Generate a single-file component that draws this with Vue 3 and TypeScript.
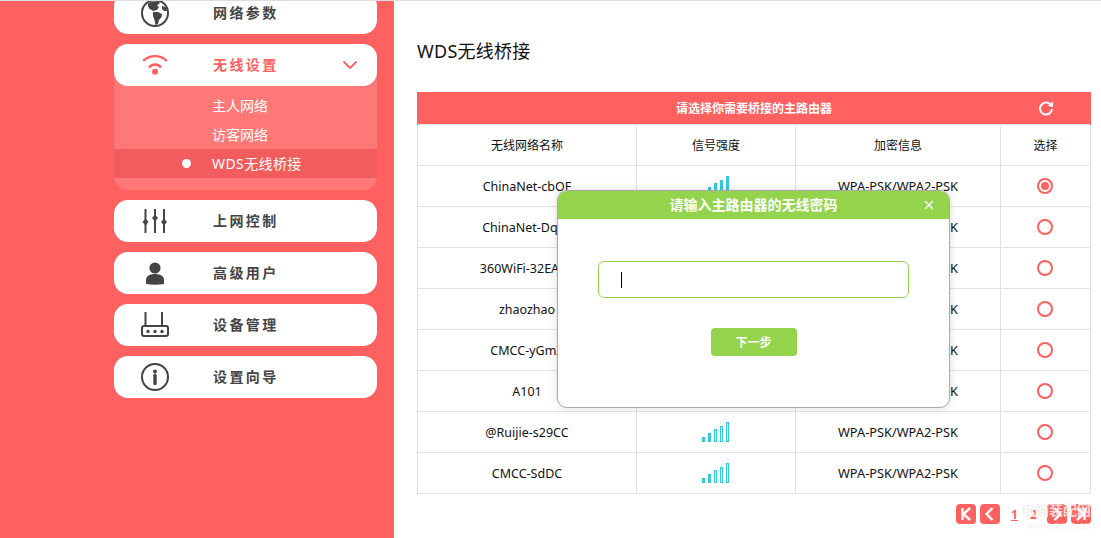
<script setup lang="ts">
interface Network {
  name: string
  bars: number
  checked?: boolean
}

const networks: Network[] = [
  { name: 'ChinaNet-cbOF', bars: 5, checked: true },
  { name: 'ChinaNet-DqKF', bars: 4 },
  { name: '360WiFi-32EA0C', bars: 3 },
  { name: 'zhaozhao', bars: 3 },
  { name: 'CMCC-yGmX', bars: 2 },
  { name: 'A101', bars: 2 },
  { name: '@Ruijie-s29CC', bars: 2 },
  { name: 'CMCC-SdDC', bars: 2 },
]

const barHeights = [5, 9, 13, 16, 20]
const subMenu = ['主人网络', '访客网络', 'WDS无线桥接']
</script>

<template>
  <div class="page">
    <div class="top-line"></div>
    <div class="body">
      <aside class="sidebar">
        <div class="menu-item first">
          <svg class="icon" viewBox="0 0 30 30">
            <circle cx="15" cy="15" r="13" fill="none" stroke="#444" stroke-width="2" />
            <path d="M8 5.5 12 3.5 18 3 20 5 17 7.5 19 9 17 12 13 13 11 11.5 9.5 11 8 8Z" fill="#444" />
            <path d="M13 14 18 14 22 16 21.5 19 19 22 18 26 15.5 27 14.5 22 13 18Z" fill="#444" />
            <path d="M22 8 25.5 9 27 13 24 13 22 11Z" fill="#444" />
          </svg>
          <span class="label">网络参数</span>
        </div>

        <div class="menu-group">
          <div class="menu-item">
            <svg class="icon" viewBox="0 0 30 30">
              <path d="M3.2 11C9.5 4.5 20.5 4.5 26.8 11" fill="none" stroke="#ff6060" stroke-width="2.4" />
              <path d="M9 17.5C12 13.5 18 13.5 21 17.5" fill="none" stroke="#ff6060" stroke-width="2.4" />
              <circle cx="15" cy="21.8" r="3" fill="#ff6060" />
            </svg>
            <span class="label active">无线设置</span>
            <svg class="chevron" viewBox="0 0 16 10">
              <path d="M1.5 1.5 8 8 14.5 1.5" fill="none" stroke="#ff6060" stroke-width="1.8" />
            </svg>
          </div>
          <ul class="sub-menu">
            <li v-for="(entry, i) in subMenu" :key="entry" :class="{ current: i === 2 }">{{ entry }}</li>
          </ul>
        </div>

        <div class="menu-item">
          <svg class="icon" viewBox="0 0 30 30">
            <path d="M5.5 3V27M15 3V27M24 3V27" stroke="#444" stroke-width="2" />
            <path d="M5.5 12.5 8.5 16 5.5 19.5 2.5 16Z" fill="#444" />
            <path d="M15 8.5 18 12 15 15.5 12 12Z" fill="#444" />
            <path d="M24 12.5 27 16 24 19.5 21 16Z" fill="#444" />
          </svg>
          <span class="label">上网控制</span>
        </div>

        <div class="menu-item">
          <svg class="icon" viewBox="0 0 30 30">
            <circle cx="15" cy="10" r="5.6" fill="#444" />
            <path d="M6 26V22C6 18 10 16 15 16S24 18 24 22V26Q15 27.5 6 26Z" fill="#444" />
          </svg>
          <span class="label">高级用户</span>
        </div>

        <div class="menu-item">
          <svg class="icon" viewBox="0 0 30 30">
            <path d="M5.5 2V17M22 2V17" stroke="#444" stroke-width="2" />
            <rect x="2" y="16" width="26" height="10" rx="2" fill="none" stroke="#444" stroke-width="2" />
            <circle cx="8" cy="21.5" r="1.7" fill="#444" />
            <circle cx="15" cy="21.5" r="1.7" fill="#444" />
            <circle cx="22" cy="21.5" r="1.7" fill="#444" />
          </svg>
          <span class="label">设备管理</span>
        </div>

        <div class="menu-item">
          <svg class="icon" viewBox="0 0 30 30">
            <circle cx="15" cy="15" r="13" fill="none" stroke="#444" stroke-width="2" />
            <circle cx="15" cy="9.5" r="2" fill="#444" />
            <path d="M15 13.5V21.5" stroke="#444" stroke-width="3.4" stroke-linecap="round" />
          </svg>
          <span class="label">设置向导</span>
        </div>
      </aside>

      <main class="content">
        <h1 class="title">WDS无线桥接</h1>
        <table class="net-table">
          <colgroup>
            <col class="col-name" />
            <col class="col-signal" />
            <col class="col-enc" />
            <col />
          </colgroup>
          <thead>
            <tr class="banner">
              <th colspan="4">
                <div class="banner-inner">
                  请选择你需要桥接的主路由器
                  <svg class="refresh" viewBox="0 0 16 16">
                    <path d="M13.2 5.5A6 6 0 1 0 14 9" fill="none" stroke="#fff" stroke-width="2" />
                    <path d="M15 1.5 15 7 9.8 6Z" fill="#fff" />
                  </svg>
                </div>
              </th>
            </tr>
            <tr class="heads">
              <th>无线网络名称</th>
              <th>信号强度</th>
              <th>加密信息</th>
              <th>选择</th>
            </tr>
          </thead>
          <tbody>
            <tr v-for="net in networks" :key="net.name">
              <td class="net-name">{{ net.name }}</td>
              <td>
                <div class="signal">
                  <span
                    v-for="(h, i) in barHeights"
                    :key="i"
                    class="bar"
                    :class="{ on: i < net.bars }"
                    :style="{ height: h + 'px' }"
                  ></span>
                </div>
              </td>
              <td class="net-enc">WPA-PSK/WPA2-PSK</td>
              <td>
                <span class="radio" :class="{ checked: net.checked }"></span>
              </td>
            </tr>
          </tbody>
        </table>

        <div class="pager">
          <span class="page-btn">
            <svg viewBox="0 0 20 20"><path d="M6.5 4V16M14 4 7.5 10 14 16" fill="none" stroke="#fff" stroke-width="2.4" /></svg>
          </span>
          <span class="page-btn">
            <svg viewBox="0 0 20 20"><path d="M12.5 4 6.5 10 12.5 16" fill="none" stroke="#fff" stroke-width="2.4" /></svg>
          </span>
          <div class="page-nums">
            <span class="num cur">1</span>
            <span class="num">2</span>
          </div>
          <span class="page-btn">
            <svg viewBox="0 0 20 20"><path d="M7.5 4 13.5 10 7.5 16" fill="none" stroke="#fff" stroke-width="2.4" /></svg>
          </span>
          <span class="page-btn">
            <svg viewBox="0 0 20 20"><path d="M13.5 4V16M6 4 12.5 10 6 16" fill="none" stroke="#fff" stroke-width="2.4" /></svg>
          </span>
        </div>
      </main>
    </div>

    <div class="watermark">
      <div class="wm-cn">电脑装配网</div>
      <div class="wm-en">www.dnzp.com</div>
    </div>

    <div class="modal">
      <div class="modal-head">
        请输入主路由器的无线密码
        <svg class="close" viewBox="0 0 10 10">
          <path d="M1 1 9 9M9 1 1 9" stroke="#fff" stroke-width="1.4" />
        </svg>
      </div>
      <div class="modal-body">
        <div class="pwd-input"><span class="caret"></span></div>
        <button class="next-btn">下一步</button>
      </div>
    </div>
  </div>
</template>

<style>
html,
body {
  margin: 0;
  background: #fff;
  overflow: hidden;
}
</style>

<style scoped>
.page {
  position: relative;
  width: 1101px;
  height: 538px;
  display: flex;
  flex-direction: column;
  overflow: hidden;
  font-family: "Noto Sans", "Noto Sans CJK SC", sans-serif;
  color: #111;
}

.top-line {
  height: 1px;
  background: #ddd;
  flex: none;
}

.body {
  flex: 1;
  display: flex;
  min-height: 0;
}

.sidebar {
  width: 394px;
  flex: none;
  box-sizing: border-box;
  padding: 0 17px 0 114px;
  background: #ff6060;
  display: flex;
  flex-direction: column;
  gap: 10px;
  overflow: hidden;
}

.menu-item {
  height: 42px;
  flex: none;
  display: flex;
  align-items: center;
  background: #fff;
  border-radius: 14px;
}

.menu-item.first {
  margin-top: -9px;
}

.icon {
  width: 30px;
  height: 30px;
  margin-left: 26px;
  flex: none;
}

.label {
  margin-left: 43px;
  margin-bottom: 2px;
  font-size: 14px;
  font-weight: 700;
  letter-spacing: 2.4px;
  color: #444;
}

.label.active {
  color: #ff6060;
}

.chevron {
  width: 16px;
  height: 10px;
  margin-left: 63px;
}

.menu-group {
  background: #ff7878;
  border-radius: 14px;
  height: 146px;
  flex: none;
}

.sub-menu {
  list-style: none;
  margin: 0;
  padding: 5px 0 0;
}

.sub-menu li {
  position: relative;
  height: 29px;
  line-height: 29px;
  padding-left: 98px;
  font-size: 14px;
  color: #fff;
}

.sub-menu li.current {
  background: #f25c5c;
  letter-spacing: 0.4px;
}

.sub-menu li.current::before {
  content: "";
  position: absolute;
  left: 68px;
  top: 10px;
  width: 9px;
  height: 9px;
  border-radius: 50%;
  background: #fff;
}

.content {
  flex: 1;
  min-width: 0;
  padding-left: 23px;
}

.title {
  margin: 0;
  padding-top: 36px;
  height: 55px;
  font-size: 18px;
  line-height: 28px;
  font-weight: 400;
  letter-spacing: 0.25px;
  color: #111;
}

.net-table {
  width: 674px;
  table-layout: fixed;
  border-collapse: collapse;
  font-size: 12px;
}

.col-name {
  width: 219px;
}

.col-signal {
  width: 159px;
}

.col-enc {
  width: 205px;
}

.net-table td,
.heads th {
  height: 40px;
  padding: 0;
  border: 1px solid #e2e2e2;
  text-align: center;
  font-weight: 400;
  color: #111;
}

.net-table .net-name {
  font-size: 12.5px;
}

.net-table .net-enc {
  font-size: 12.8px;
}

.banner th {
  padding: 0;
  border: 1px solid #ff6060;
  border-bottom: 0;
  background: #ff6060;
  color: #fff;
  font-size: 12px;
  font-weight: 700;
}

.banner-inner {
  position: relative;
  height: 31px;
  line-height: 31px;
}

.refresh {
  position: absolute;
  left: 620px;
  top: 7px;
  width: 16px;
  height: 16px;
}

.signal {
  display: flex;
  justify-content: center;
  align-items: flex-end;
  gap: 3px;
  height: 20px;
  padding-right: 1px;
}

.bar {
  box-sizing: border-box;
  width: 3px;
  border: 1px solid #33c8e2;
}

.bar.on {
  background: #3cc4de;
}

.radio {
  display: inline-block;
  vertical-align: middle;
  box-sizing: border-box;
  width: 16px;
  height: 16px;
  margin: 0 2px 1px 0;
  border: 2px solid #ff6060;
  border-radius: 50%;
  position: relative;
}

.radio.checked::after {
  content: "";
  position: absolute;
  left: 2px;
  top: 2px;
  width: 8px;
  height: 8px;
  border-radius: 50%;
  background: #ff6060;
}

.pager {
  width: 674px;
  margin-top: 10px;
  display: flex;
  justify-content: flex-end;
  align-items: center;
  gap: 4px;
}

.page-btn {
  width: 20px;
  height: 20px;
  border-radius: 4px;
  background: #ff6060;
}

.page-btn svg {
  display: block;
  width: 20px;
  height: 20px;
}

.page-nums {
  display: flex;
  margin-left: 1px;
}

.num {
  width: 19px;
  text-align: center;
  font-size: 12px;
  font-weight: 700;
  color: #ff6060;
}

.num.cur {
  text-decoration: underline;
}

.watermark {
  position: absolute;
  left: 1021px;
  top: 500px;
  width: 80px;
  pointer-events: none;
}

.wm-cn {
  font-size: 14px;
  line-height: 20px;
  font-weight: 700;
  color: rgba(240, 240, 240, 0.85);
}

.wm-en {
  margin-left: 6px;
  font-size: 10px;
  line-height: 11px;
  color: rgba(235, 235, 235, 0.5);
}

.modal {
  position: absolute;
  left: 557px;
  top: 190px;
  width: 393px;
  height: 218px;
  box-sizing: border-box;
  display: flex;
  flex-direction: column;
  background: #fff;
  border: 1px solid #aaa;
  border-radius: 10px;
  overflow: hidden;
  box-shadow: 0 0 8px rgba(0, 0, 0, 0.15);
}

.modal-head {
  position: relative;
  flex: none;
  height: 28px;
  line-height: 28px;
  text-align: center;
  background: #94d44c;
  color: #fff;
  font-size: 14px;
  font-weight: 700;
}

.close {
  position: absolute;
  right: 15px;
  top: 9px;
  width: 10px;
  height: 10px;
}

.modal-body {
  display: flex;
  flex-direction: column;
  align-items: center;
  padding-top: 42px;
}

.pwd-input {
  width: 311px;
  height: 37px;
  box-sizing: border-box;
  border: 1px solid #94d44c;
  border-radius: 6px;
  padding: 10px 0 0 22px;
}

.caret {
  display: block;
  width: 1px;
  height: 16px;
  background: #000;
}

.next-btn {
  margin-top: 30px;
  width: 86px;
  height: 28px;
  padding: 0;
  border: none;
  border-radius: 4px;
  background: #94d44c;
  color: #fff;
  font-family: inherit;
  font-size: 12px;
  font-weight: 700;
}
</style>
